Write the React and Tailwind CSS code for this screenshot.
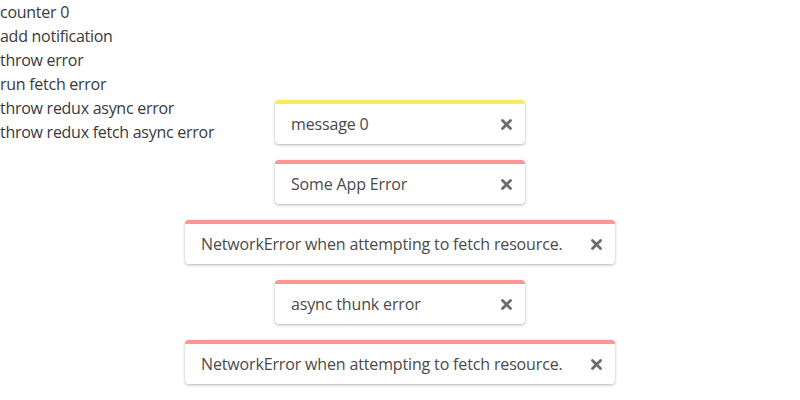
import React from "react";

function XIcon() {
  return (
    <svg width="11" height="11" viewBox="0 0 11 11" className="shrink-0">
      <path d="M1.5 1.5 L9.5 9.5 M9.5 1.5 L1.5 9.5" stroke="#6b6b6b" strokeWidth="2.8" strokeLinecap="round" />
    </svg>
  );
}

function Toast({ text, color, wide }) {
  return (
    <div
      className={`flex items-center justify-between bg-white rounded-[4px] border-t-4 ${color} shadow-[0_1px_3px_rgba(0,0,0,0.3)] pl-4 pr-[13px] py-2 ${wide ? "w-[430px]" : "w-[250px]"}`}
    >
      <span className="text-[16px] leading-6 text-[#4a4a4a] tracking-[-0.15px]">{text}</span>
      <XIcon />
    </div>
  );
}

export default function App() {
  const buttons = [
    "counter 0",
    "add notification",
    "throw error",
    "run fetch error",
    "throw redux async error",
    "throw redux fetch async error",
  ];
  return (
    <div className="w-[800px] h-[400px] bg-white relative font-['Open_Sans',sans-serif]">
      <div className="flex flex-col items-start">
        {buttons.map((b) => (
          <div key={b} className="text-[16px] leading-6 text-[#3a3a3a] tracking-[-0.27px]">
            {b}
          </div>
        ))}
      </div>
      <div className="absolute top-[100px] left-0 right-0 flex flex-col items-center gap-4">
        <Toast text="message 0" color="border-[#fbea5b]" />
        <Toast text="Some App Error" color="border-[#ff9595]" />
        <Toast text="NetworkError when attempting to fetch resource." color="border-[#ff9595]" wide />
        <Toast text="async thunk error" color="border-[#ff9595]" />
        <Toast text="NetworkError when attempting to fetch resource." color="border-[#ff9595]" wide />
      </div>
    </div>
  );
}
